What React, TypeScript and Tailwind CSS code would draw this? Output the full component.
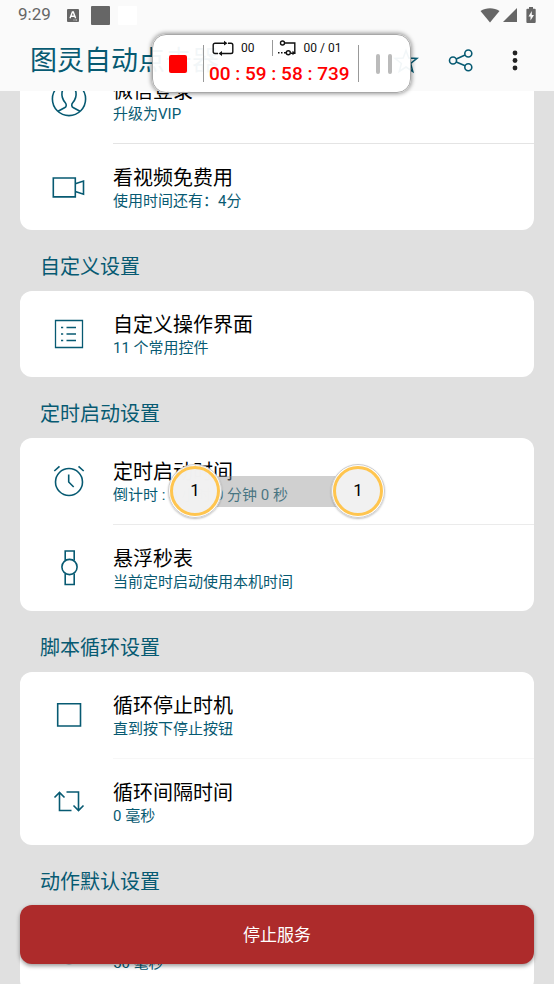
import type { ReactNode } from "react";

interface SettingRow {
  title: string;
  detail: string;
  icon: ReactNode;
}

interface SettingGroup {
  heading?: string;
  divider: string;
  rows: SettingRow[];
}

function LineIcon({ children }: { children: ReactNode }) {
  return (
    <svg
      viewBox="0 0 36 36"
      fill="none"
      stroke="currentColor"
      strokeWidth="1.6"
      className="h-9 w-9 shrink-0"
      aria-hidden="true"
    >
      {children}
    </svg>
  );
}

const groups: SettingGroup[] = [
  {
    divider: "border-[#e4e4e4]",
    rows: [
      {
        title: "微信登录",
        detail: "升级为VIP",
        icon: (
          <LineIcon>
            <circle cx="18" cy="17" r="16.6" />
            <path d="M7 29.300l6.500-3.500c2-1.100 2.300-3.300.8-5C11.500 17.500 10.500 14 11 10.500 11.500 6.500 14 4.500 18 4.500s6.500 2 7 6c.5 3.500-.5 7-3.300 10.300-1.500 1.700-1.200 3.900.8 5l6.500 3.500" />
          </LineIcon>
        ),
      },
      {
        title: "看视频免费用",
        detail: "使用时间还有：4分",
        icon: (
          <LineIcon>
            <path d="M2.300 9h22v18.900h-22zM24.300 14.700l8.200-2.700v13.200l-8.200-2.700" />
          </LineIcon>
        ),
      },
    ],
  },
  {
    heading: "自定义设置",
    divider: "border-[#ebebeb]",
    rows: [
      {
        title: "自定义操作界面",
        detail: "11 个常用控件",
        icon: (
          <LineIcon>
            <path d="M4.500 4.500h27v27h-27z" strokeWidth="1.300" />
            <path d="M10 11.500h2.200M10 18h2.200M10 24.500h2.200M15.500 11.500h9.500M15.500 18h9.500M15.500 24.500h9.500" strokeWidth="1.300" />
          </LineIcon>
        ),
      },
    ],
  },
  {
    heading: "定时启动设置",
    divider: "border-[#ebebeb]",
    rows: [
      {
        title: "定时启动时间",
        detail: "倒计时 : 0 小时 0 分钟 0 秒",
        icon: (
          <LineIcon>
            <circle cx="18" cy="19" r="13.500" />
            <path d="M17.700 11.500v7.500l5 5M3.300 8l5.200-4.700M27.500 3.300L32.700 8" />
          </LineIcon>
        ),
      },
      {
        title: "悬浮秒表",
        detail: "当前定时启动使用本机时间",
        icon: (
          <LineIcon>
            <circle cx="18.500" cy="17" r="7.600" />
            <path d="M14.200 10.500V1h9v9.500M14.200 23.500v11h9v-11" />
          </LineIcon>
        ),
      },
    ],
  },
  {
    heading: "脚本循环设置",
    divider: "border-[#f7f7f7]",
    rows: [
      {
        title: "循环停止时机",
        detail: "直到按下停止按钮",
        icon: (
          <LineIcon>
            <path d="M6.700 6.700h22.800v22.300H6.700z" />
          </LineIcon>
        ),
      },
      {
        title: "循环间隔时间",
        detail: "0 毫秒",
        icon: (
          <LineIcon>
            <path d="M8.500 8.500v18h12M3.500 13.500l5-5 5 5M15.500 8h12v18.500M22.500 21.500l5 5 5-5" />
          </LineIcon>
        ),
      },
    ],
  },
  {
    heading: "动作默认设置",
    divider: "border-[#ebebeb]",
    rows: [
      {
        title: "点击间隔时间",
        detail: "50 毫秒",
        icon: (
          <LineIcon>
            <circle cx="18" cy="18" r="14.500" />
            <path d="M18 8v10l6 5" />
          </LineIcon>
        ),
      },
    ],
  },
];

function StatusBar() {
  return (
    <div className="flex h-[30px] items-center px-[18px] text-[#666]">
      <span className="text-[17px]">9:29</span>
      <svg viewBox="0 0 12 13" className="ml-4 h-[13px] w-3" aria-hidden="true">
        <rect width="12" height="13" rx="1" fill="currentColor" />
        <path d="M3 9.200L5.400 3h.9l2.300 6.200M4 7.200h3.600" fill="none" stroke="#fff" strokeWidth="1.400" />
        <path d="M6.500 11h1M8.500 11h1.500" stroke="#fff" strokeWidth=".8" />
      </svg>
      <span className="ml-3 h-[19px] w-[19px] rounded-[1px] bg-[#666]" />
      <span className="ml-2 h-[19px] w-[19px] rounded-[1px] bg-white" />
      <svg viewBox="0 0 20 16" className="ml-auto h-4 w-5" fill="currentColor" aria-hidden="true">
        <path d="M10 15.500L.5 4C6 .2 14 .2 19.500 4z" />
      </svg>
      <svg viewBox="0 0 14 14" className="ml-[3px] h-3.5 w-3.5" fill="currentColor" aria-hidden="true">
        <path d="M14 0v14H0z" />
      </svg>
      <svg viewBox="0 0 10 16" className="ml-[9px] h-4 w-2.5" fill="currentColor" aria-hidden="true">
        <path d="M3 0h4v1.700h1.800c.5 0 .9.4.9.900v12.500c0 .5-.4.9-.9.900H1.300a.9.900 0 0 1-.9-.9V2.600c0-.5.4-.9.900-.9H3z" />
        <path d="M5.800 4L2.500 9.500h2v4L8 8H5.800z" fill="#fafafa" />
      </svg>
    </div>
  );
}

function AppHeader() {
  return (
    <header className="absolute inset-x-0 top-0 bg-[#fafafa]">
      <StatusBar />
      <div className="flex h-[61px] items-center pl-[30px] pr-9 text-[#075a72]">
        <h1 className="text-[27px] leading-8">图灵自动点击器</h1>
        <button type="button" aria-label="收藏" className="ml-auto">
          <svg viewBox="0 0 26 26" className="h-[26px] w-[26px]" fill="none" stroke="currentColor" strokeWidth="1.500" aria-hidden="true">
            <path d="M13 2.500l2.800 7.600 8.200.3-6.400 5.100 2.200 8-6.800-4.500-6.800 4.500 2.200-8L2 10.400l8.200-.3z" />
          </svg>
        </button>
        <button type="button" aria-label="分享" className="ml-[29px]">
          <svg viewBox="0 0 26 26" className="h-[26px] w-[26px]" fill="none" stroke="currentColor" strokeWidth="1.600" aria-hidden="true">
            <circle cx="5" cy="12.500" r="3.500" />
            <circle cx="20.300" cy="5.500" r="3.500" />
            <circle cx="20.300" cy="19.200" r="3.500" />
            <path d="M8.300 11l8.800-4M8.300 14l8.800 3.800" />
          </svg>
        </button>
        <button type="button" aria-label="更多" className="ml-[38px] text-[#222]">
          <svg viewBox="0 0 6 22" className="h-[22px] w-1.5" fill="currentColor" aria-hidden="true">
            <circle cx="3" cy="3" r="2.400" />
            <circle cx="3" cy="10.500" r="2.400" />
            <circle cx="3" cy="18" r="2.400" />
          </svg>
        </button>
      </div>
    </header>
  );
}

function RecorderPanel() {
  return (
    <section
      aria-label="脚本控制"
      className="absolute left-[152px] top-[34px] flex h-[59px] w-[259px] items-center rounded-[14px] border border-[#a8a8a8] bg-white/95 pl-4 text-[#111] shadow-[0_0_4px_1px_rgba(0,0,0,0.4)]"
    >
      <button type="button" aria-label="停止" className="h-[18px] w-[18px] rounded-[2px] bg-[#f00]" />
      <span className="ml-4 h-[37px] w-px bg-[#999]" />
      <div className="ml-[5px] w-[149px]">
        <div className="flex h-5 items-center text-xs">
          <svg viewBox="0 0 22 16" className="ml-[3px] h-4 w-[22px]" fill="none" stroke="currentColor" strokeWidth="1.400" aria-hidden="true">
            <path d="M6 13.500H3a1.800 1.800 0 0 1-1.800-1.800V5A1.800 1.800 0 0 1 3 3.200h10M16 3.200h3A1.800 1.800 0 0 1 20.800 5v6.700a1.800 1.800 0 0 1-1.800 1.800H9" />
            <path d="M12 .8l3.500 2.400L12 5.600zM10 11l-3.500 2.500L10 16z" fill="currentColor" stroke="none" />
          </svg>
          <span className="ml-[7px]">00</span>
          <span className="ml-[17px] h-4 w-px bg-[#999]" />
          <svg viewBox="0 0 19 16" className="ml-[5px] h-4 w-[19px]" fill="none" stroke="currentColor" strokeWidth="1.400" aria-hidden="true">
            <circle cx="4.500" cy="3" r="2" />
            <path d="M6.500 3h10.300v10.200h-4" />
            <circle cx="10.300" cy="12.700" r="2" />
            <path d="M0 12.700h1.500M3 12.700h1.500M6 12.700h2" />
            <path d="M14.500 10.700l3 2.300-3 2.300z" fill="currentColor" stroke="none" />
          </svg>
          <span className="ml-[7px]">00 / 01</span>
        </div>
        <div className="whitespace-nowrap text-[19px] font-medium leading-8 text-[#f00]">00 : 59 : 58 : 739</div>
      </div>
      <span className="h-[37px] w-px bg-[#999]" />
      <button type="button" aria-label="暂停" className="ml-[17px] flex gap-2">
        <span className="h-5 w-1 rounded-full bg-[#bbb]" />
        <span className="h-5 w-1 rounded-full bg-[#bbb]" />
      </button>
    </section>
  );
}

function TouchPoint({ label }: { label: string }) {
  return (
    <span className="flex h-[54px] w-[54px] items-center justify-center rounded-full border border-[#ccc] bg-white/90 shadow-[0_1px_2px_rgba(0,0,0,0.25)]">
      <span className="flex h-[50px] w-[50px] items-center justify-center rounded-full border-[3px] border-[#ffc54f] bg-[#f0f0f0]/90 text-[17px] text-black">
        {label}
      </span>
    </span>
  );
}

// Start and end of a swipe gesture, floating above the settings list
function SwipeGesture() {
  return (
    <div className="absolute left-[168px] top-[464px] flex w-[217px] items-center justify-between">
      <span className="absolute inset-x-[27px] top-3 h-[31px] bg-[#969696]/45" />
      <span className="relative">
        <TouchPoint label="1" />
      </span>
      <span className="relative">
        <TouchPoint label="1" />
      </span>
    </div>
  );
}

function SettingCard({ rows, divider }: { rows: SettingRow[]; divider: string }) {
  return (
    <ul className="overflow-hidden rounded-xl bg-white">
      {rows.map((row, i) => (
        <li key={row.title} className="flex pl-[31px] text-[#075a72]">
          <span className="flex items-center">{row.icon}</span>
          <div className={i > 0 ? `ml-[26px] flex-1 border-t ${divider}` : "ml-[26px] flex-1"}>
            <div className="flex h-[86px] flex-col justify-center pt-0.5">
              <h3 className="text-xl leading-[26px] text-black">{row.title}</h3>
              <p className="text-[15px] leading-5">{row.detail}</p>
            </div>
          </div>
        </li>
      ))}
    </ul>
  );
}

export default function App() {
  return (
    <div className="relative h-screen overflow-hidden bg-[#e0e0e0] font-[Roboto,'Noto_Sans_CJK_SC',sans-serif]">
      <main className="px-5 pt-[57px]">
        {groups.map((group) => (
          <section key={group.rows[0].title}>
            {group.heading && (
              <h2 className="flex h-[61px] items-center pl-5 pt-3 text-xl text-[#075a72]">{group.heading}</h2>
            )}
            <SettingCard rows={group.rows} divider={group.divider} />
          </section>
        ))}
      </main>
      <AppHeader />
      <SwipeGesture />
      <RecorderPanel />
      <button
        type="button"
        className="absolute inset-x-5 bottom-5 h-[59px] rounded-xl bg-[#ad2b2b] pt-0.5 text-[17px] text-white shadow-[0_2px_4px_rgba(0,0,0,0.4)]"
      >
        停止服务
      </button>
    </div>
  );
}
